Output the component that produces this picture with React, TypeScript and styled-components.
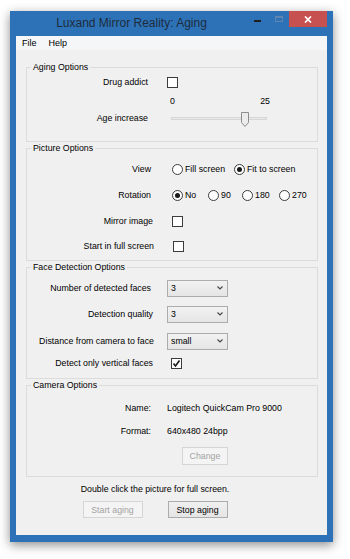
import React from 'react';
import styled, { createGlobalStyle } from 'styled-components';

const GlobalStyle = createGlobalStyle`
    html, body {
        margin: 0;
        padding: 0;
        background: #ffffff;
    }
    body {
        font-family: "Liberation Sans", Arial, sans-serif;
        font-size: 8.8px;
        color: #000000;
    }
`;

const Desktop = styled.div`
    width: 350px;
    height: 559px;
    box-sizing: border-box;
    padding: 11px 0 0 10px;
    overflow: hidden;
`;

const Window = styled.div`
    width: 323px;
    height: 531px;
    box-sizing: border-box;
    background: #2d72b7;
    padding: 0 6px 7px 6px;
    display: flex;
    flex-direction: column;
    box-shadow: 0 3px 10px rgba(0, 0, 0, 0.45);
`;

const TitleBar = styled.div`
    height: 25px;
    display: flex;
    align-items: flex-start;
    flex-shrink: 0;
`;

const Title = styled.div`
    flex: 1;
    text-align: center;
    font-size: 12px;
    line-height: 25px;
    color: #1d2c3d;
    white-space: nowrap;
`;

const CaptionButton = styled.div`
    width: 21px;
    height: 16px;
    display: flex;
    justify-content: center;
`;

const MinimizeGlyph = styled.span`
    width: 7px;
    height: 2px;
    margin-top: 9px;
    background: #1e1e1e;
`;

const MaximizeGlyph = styled.span`
    width: 8px;
    height: 6px;
    margin-top: 5px;
    box-sizing: border-box;
    border: 1px solid #5f86b3;
    border-top-width: 2px;
`;

const CloseButton = styled.div`
    width: 38px;
    height: 16px;
    background: #c75050;
    display: flex;
    align-items: center;
    justify-content: center;
`;

const MenuBar = styled.div`
    height: 14px;
    flex-shrink: 0;
    background: #f5f6f7;
    display: flex;
    align-items: center;
    gap: 12px;
    padding-left: 6px;
    font-size: 9px;
`;

const Client = styled.div`
    flex: 1;
    background: #f0f0f0;
    padding: 11px 9px 0 10px;
    display: flex;
    flex-direction: column;
`;

const GroupBox = styled.fieldset<{ $pb: number }>`
    margin: 0;
    padding: 0 0 ${p => p.$pb}px 0;
    border: 1px solid #dcdcdc;
    min-width: 0;
`;

const Caption = styled.legend`
    margin-left: 4px;
    padding: 0 2px;
    line-height: 12px;
    font-size: 8.8px;
`;

const Row = styled.div<{ $h: number }>`
    display: grid;
    grid-template-columns: 124px 1fr;
    column-gap: 16px;
    align-items: center;
    height: ${p => p.$h}px;
`;

const Label = styled.span<{ $shift?: number }>`
    text-align: right;
    white-space: nowrap;
    margin-right: ${p => p.$shift ?? 0}px;
`;

const Controls = styled.div<{ $indent?: number }>`
    display: flex;
    align-items: center;
    padding-left: ${p => p.$indent ?? 0}px;
    white-space: nowrap;
`;

const CheckBox = styled.span`
    width: 11px;
    height: 11px;
    box-sizing: border-box;
    border: 1px solid #3c3c3c;
    background: #ffffff;
    display: flex;
    align-items: center;
    justify-content: center;
`;

const RadioOption = styled.span<{ $w?: number }>`
    display: inline-flex;
    align-items: center;
    gap: 2px;
    width: ${p => (p.$w ? `${p.$w}px` : 'auto')};
`;

const RadioCircle = styled.span<{ $on?: boolean }>`
    width: 11px;
    height: 11px;
    box-sizing: border-box;
    border: 1px solid #3c3c3c;
    border-radius: 50%;
    background: #ffffff;
    display: flex;
    align-items: center;
    justify-content: center;

    &::after {
        content: '';
        width: 5px;
        height: 5px;
        border-radius: 50%;
        background: ${p => (p.$on ? '#1a1a1a' : 'transparent')};
    }
`;

const ScaleLabels = styled.div`
    width: 100px;
    margin-left: 3px;
    display: flex;
    justify-content: space-between;
`;

const SliderTrack = styled.div`
    position: relative;
    width: 96px;
    height: 3px;
    margin-left: 4px;
    box-sizing: border-box;
    background: #e7eaea;
    border: 1px solid #d6d6d6;
`;

const SliderThumb = styled.svg`
    position: absolute;
    top: -6px;
    width: 8px;
    height: 15px;
`;

const Combo = styled.div`
    width: 61px;
    height: 17px;
    box-sizing: border-box;
    border: 1px solid #acacac;
    background: linear-gradient(#f2f2f2, #e5e5e5);
    display: flex;
    align-items: center;
    justify-content: space-between;
    padding: 0 4px 0 3px;
`;

const PushButton = styled.button<{ $w: number; $h: number }>`
    width: ${p => p.$w}px;
    height: ${p => p.$h}px;
    box-sizing: border-box;
    padding: 0;
    font-family: inherit;
    font-size: 8.8px;
    color: #000000;
    border: 1px solid #acacac;
    background: linear-gradient(#f0f0f0, #e5e5e5);

    &:disabled {
        color: #a3a3a3;
        border-color: #d5d5d5;
        background: #f4f4f4;
    }
`;

const ButtonSlot = styled.div`
    margin-top: 10px;
    height: 18px;
    padding-left: 155px;
`;

const Footer = styled.div`
    display: flex;
    flex-direction: column;
    align-items: center;
    padding-right: 34px;
`;

const Hint = styled.div`
    margin-top: 6px;
    line-height: 12px;
`;

const FooterButtons = styled.div`
    margin-top: 6px;
    display: flex;
    gap: 25px;
`;

const CheckMark = () => (
    <svg width="9" height="9" viewBox="0 0 9 9">
        <polyline points="1.5,4.5 3.5,7 7.5,1.5" fill="none" stroke="#1a1a1a" strokeWidth="1.6" />
    </svg>
);

const Chevron = () => (
    <svg width="6" height="4" viewBox="0 0 6 4">
        <polyline points="0.5,0.5 3,3 5.5,0.5" fill="none" stroke="#4a4a4a" strokeWidth="1.2" />
    </svg>
);

const Radio = ({ label, on, w }: { label: string; on?: boolean; w?: number }) => (
    <RadioOption $w={w}>
        <RadioCircle $on={on} />
        {label}
    </RadioOption>
);

const ageValue = 20;
const ageMax = 25;

export default function App() {
    const thumbLeft = Math.round((ageValue / ageMax) * (96 - 8)) - 1;
    return (
        <>
            <GlobalStyle />
            <Desktop>
                <Window>
                    <TitleBar>
                        <Title>Luxand Mirror Reality: Aging</Title>
                        <CaptionButton>
                            <MinimizeGlyph />
                        </CaptionButton>
                        <CaptionButton>
                            <MaximizeGlyph />
                        </CaptionButton>
                        <CloseButton>
                            <svg width="8" height="7" viewBox="0 0 8 7">
                                <path d="M1 0.5 L7 6.5 M7 0.5 L1 6.5" stroke="#ffffff" strokeWidth="1.7" />
                            </svg>
                        </CloseButton>
                    </TitleBar>
                    <MenuBar>
                        <span>File</span>
                        <span>Help</span>
                    </MenuBar>
                    <Client>
                        <GroupBox $pb={16}>
                            <Caption>Aging Options</Caption>
                            <Row $h={18}>
                                <Label $shift={3}>Drug addict</Label>
                                <Controls>
                                    <CheckBox />
                                </Controls>
                            </Row>
                            <Row $h={20}>
                                <span />
                                <Controls>
                                    <ScaleLabels>
                                        <span>0</span>
                                        <span>25</span>
                                    </ScaleLabels>
                                </Controls>
                            </Row>
                            <Row $h={14}>
                                <Label $shift={3}>Age increase</Label>
                                <Controls>
                                    <SliderTrack>
                                        <SliderThumb viewBox="0 0 8 15" style={{ left: thumbLeft }}>
                                            <polygon
                                                points="0.5,0.5 7.5,0.5 7.5,10.5 4,14.5 0.5,10.5"
                                                fill="#ececec"
                                                stroke="#8d8d8d"
                                            />
                                        </SliderThumb>
                                    </SliderTrack>
                                </Controls>
                            </Row>
                        </GroupBox>

                        <GroupBox $pb={4}>
                            <Caption>Picture Options</Caption>
                            <Row $h={30}>
                                <Label>View</Label>
                                <Controls $indent={5}>
                                    <Radio label="Fill screen" w={62} />
                                    <Radio label="Fit to screen" on />
                                </Controls>
                            </Row>
                            <Row $h={22}>
                                <Label>Rotation</Label>
                                <Controls $indent={5}>
                                    <Radio label="No" on w={36} />
                                    <Radio label="90" w={34} />
                                    <Radio label="180" w={37} />
                                    <Radio label="270" />
                                </Controls>
                            </Row>
                            <Row $h={30}>
                                <Label $shift={-2}>Mirror image</Label>
                                <Controls $indent={5}>
                                    <CheckBox />
                                </Controls>
                            </Row>
                            <Row $h={20}>
                                <Label $shift={-3}>Start in full screen</Label>
                                <Controls $indent={6}>
                                    <CheckBox />
                                </Controls>
                            </Row>
                        </GroupBox>

                        <GroupBox $pb={9}>
                            <Caption>Face Detection Options</Caption>
                            <Row $h={30}>
                                <Label>Number of detected faces</Label>
                                <Controls>
                                    <Combo>
                                        <span>3</span>
                                        <Chevron />
                                    </Combo>
                                </Controls>
                            </Row>
                            <Row $h={22}>
                                <Label $shift={-2}>Detection quality</Label>
                                <Controls>
                                    <Combo>
                                        <span>3</span>
                                        <Chevron />
                                    </Combo>
                                </Controls>
                            </Row>
                            <Row $h={32}>
                                <Label $shift={-3}>Distance from camera to face</Label>
                                <Controls>
                                    <Combo>
                                        <span>small</span>
                                        <Chevron />
                                    </Combo>
                                </Controls>
                            </Row>
                            <Row $h={12}>
                                <Label $shift={-2}>Detect only vertical faces</Label>
                                <Controls $indent={4}>
                                    <CheckBox>
                                        <CheckMark />
                                    </CheckBox>
                                </Controls>
                            </Row>
                        </GroupBox>

                        <GroupBox $pb={11}>
                            <Caption>Camera Options</Caption>
                            <Row $h={34}>
                                <Label>Name:</Label>
                                <Controls>Logitech QuickCam Pro 9000</Controls>
                            </Row>
                            <Row $h={12}>
                                <Label>Format:</Label>
                                <Controls>640x480 24bpp</Controls>
                            </Row>
                            <ButtonSlot>
                                <PushButton $w={46} $h={18} disabled>
                                    Change
                                </PushButton>
                            </ButtonSlot>
                        </GroupBox>

                        <Footer>
                            <Hint>Double click the picture for full screen.</Hint>
                            <FooterButtons>
                                <PushButton $w={60} $h={17} disabled>
                                    Start aging
                                </PushButton>
                                <PushButton $w={60} $h={17}>
                                    Stop aging
                                </PushButton>
                            </FooterButtons>
                        </Footer>
                    </Client>
                </Window>
            </Desktop>
        </>
    );
}
